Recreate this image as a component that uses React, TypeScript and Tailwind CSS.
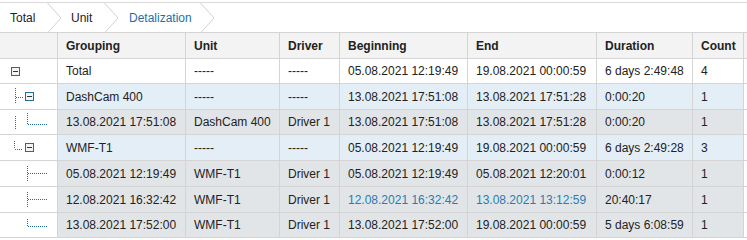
import React from "react";

type Kind = "total" | "group" | "detail";

type Row = {
  kind: Kind;
  h: string;
  tree: React.ReactNode;
  cells: string[];
  blue?: number[];
};

const LINE = "#1f6d9e";

const Box = ({ x }: { x: number }) => (
  <>
    <rect x={x + 0.5} y={8.5} width={8} height={8} fill="#f4f4f4" stroke={LINE} />
    <line x1={x + 2} x2={x + 7} y1={12.5} y2={12.5} stroke="#333" />
  </>
);

const Dot = (props: { x1: number; y1: number; x2: number; y2: number }) => (
  <line {...props} stroke={LINE} strokeDasharray="1 1" />
);

const Tree = ({ children }: { children: React.ReactNode }) => (
  <svg width="57" height="25" className="block">
    {children}
  </svg>
);

const cols = ["w-[58px]", "w-[128px]", "w-[94px]", "w-[60px]", "w-[128px]", "w-[129px]", "w-[96px]", "w-[51px]"];
const heads = ["", "Grouping", "Unit", "Driver", "Beginning", "End", "Duration", "Count"];

const rows: Row[] = [
  {
    kind: "total",
    h: "h-[25px]",
    tree: (
      <Tree>
        <Box x={11} />
      </Tree>
    ),
    cells: ["Total", "-----", "-----", "05.08.2021 12:19:49", "19.08.2021 00:00:59", "6 days 2:49:48", "4"],
  },
  {
    kind: "group",
    h: "h-[26px]",
    tree: (
      <Tree>
        <Dot x1={15.5} y1={4} x2={15.5} y2={20} />
        <Dot x1={16} y1={13.5} x2={24} y2={13.5} />
        <Box x={25} />
      </Tree>
    ),
    cells: ["DashCam 400", "-----", "-----", "13.08.2021 17:51:08", "13.08.2021 17:51:28", "0:00:20", "1"],
  },
  {
    kind: "detail",
    h: "h-[25px]",
    tree: (
      <Tree>
        <Dot x1={15.5} y1={6} x2={15.5} y2={19} />
        <Dot x1={27.5} y1={3} x2={27.5} y2={14} />
        <Dot x1={28} y1={14.5} x2={48} y2={14.5} />
      </Tree>
    ),
    cells: ["13.08.2021 17:51:08", "DashCam 400", "Driver 1", "13.08.2021 17:51:08", "13.08.2021 17:51:28", "0:00:20", "1"],
  },
  {
    kind: "group",
    h: "h-[26px]",
    tree: (
      <Tree>
        <Dot x1={14.5} y1={6} x2={14.5} y2={14} />
        <Dot x1={15} y1={14.5} x2={23} y2={14.5} />
        <Box x={25} />
      </Tree>
    ),
    cells: ["WMF-T1", "-----", "-----", "05.08.2021 12:19:49", "19.08.2021 00:00:59", "6 days 2:49:28", "3"],
  },
  {
    kind: "detail",
    h: "h-[26px]",
    tree: (
      <Tree>
        <Dot x1={27.5} y1={5} x2={27.5} y2={21} />
        <Dot x1={28} y1={12.5} x2={48} y2={12.5} />
      </Tree>
    ),
    cells: ["05.08.2021 12:19:49", "WMF-T1", "Driver 1", "05.08.2021 12:19:49", "05.08.2021 12:20:01", "0:00:12", "1"],
  },
  {
    kind: "detail",
    h: "h-[26px]",
    tree: (
      <Tree>
        <Dot x1={27.5} y1={5} x2={27.5} y2={21} />
        <Dot x1={28} y1={12.5} x2={48} y2={12.5} />
      </Tree>
    ),
    cells: ["12.08.2021 16:32:42", "WMF-T1", "Driver 1", "12.08.2021 16:32:42", "13.08.2021 13:12:59", "20:40:17", "1"],
    blue: [3, 4],
  },
  {
    kind: "detail",
    h: "h-[25px]",
    tree: (
      <Tree>
        <Dot x1={27.5} y1={6} x2={27.5} y2={13} />
        <Dot x1={28} y1={13.5} x2={48} y2={13.5} />
      </Tree>
    ),
    cells: ["13.08.2021 17:52:00", "WMF-T1", "Driver 1", "13.08.2021 17:52:00", "19.08.2021 00:00:59", "5 days 6:08:59", "1"],
  },
];

const rowBg: Record<Kind, string> = {
  total: "bg-white",
  group: "bg-[#e4eef6]",
  detail: "bg-[#e2e5e8]",
};

const Chevron = () => (
  <svg width="15" height="30" className="block shrink-0">
    <polyline points="0.5,0 14,15 0.5,30" fill="none" stroke="#d2d2d2" />
  </svg>
);

export default function App() {
  return (
    <div className="w-[747px] h-[240px] overflow-hidden bg-white pt-[2px] font-['Liberation_Sans',Arial,sans-serif] text-[12px] text-[#222]">
      {/* breadcrumb */}
      <div className="flex h-[30px] items-center border-t border-[#d9d9d9]">
        <div className="w-[47px] pl-[10px]">Total</div>
        <Chevron />
        <div className="w-[42px] pl-[9px]">Unit</div>
        <Chevron />
        <div className="w-[81px] pl-[10px] text-[#1f6fa5]">Detalization</div>
        <Chevron />
      </div>

      {/* header */}
      <div className="flex h-[27px] border-y border-[#d4d4d4] bg-[#f3f3f3] font-bold">
        {heads.map((t, i) => (
          <div key={i} className={`${cols[i]} flex items-center border-r border-[#d4d4d4] pl-[8px]`}>
            {t}
          </div>
        ))}
        <div className="flex-1" />
      </div>

      {rows.map((r, ri) => (
        <div key={ri} className={`flex ${r.h} border-b border-[#d4d4d4]`}>
          <div className="w-[58px] border-r border-[#d4d4d4] bg-white">{r.tree}</div>
          {r.cells.map((c, ci) => (
            <div
              key={ci}
              className={`${cols[ci + 1]} flex items-center border-r border-[#d4d4d4] pl-[8px] whitespace-nowrap ${rowBg[r.kind]} ${
                r.blue?.includes(ci) ? "text-[#2b7bb2]" : ""
              }`}
            >
              {c}
            </div>
          ))}
          <div className="flex-1 bg-white" />
        </div>
      ))}
    </div>
  );
}
